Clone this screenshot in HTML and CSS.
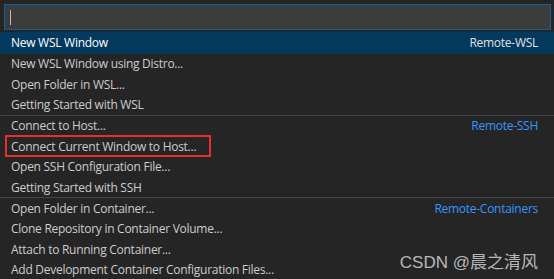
FILE: index.html
```html
<!DOCTYPE html>
<html>
<head>
<meta charset="utf-8">
<link rel="stylesheet" href="styles.css">
</head>
<body>
<div class="picker">
  <div class="input-wrap"><div class="input"><span class="caret"></span></div></div>
  <div class="list">
    <div class="row selected"><span class="label">New WSL Window</span><span class="group">Remote-WSL</span></div>
    <div class="row"><span class="label">New WSL Window using Distro...</span></div>
    <div class="row"><span class="label">Open Folder in WSL...</span></div>
    <div class="row"><span class="label">Getting Started with WSL</span></div>
    <div class="row sep"><span class="label">Connect to Host...</span><span class="group blue">Remote-SSH</span></div>
    <div class="row marked"><span class="label">Connect Current Window to Host...</span></div>
    <div class="row"><span class="label">Open SSH Configuration File...</span></div>
    <div class="row"><span class="label">Getting Started with SSH</span></div>
    <div class="row sep"><span class="label">Open Folder in Container...</span><span class="group blue">Remote-Containers</span></div>
    <div class="row"><span class="label">Clone Repository in Container Volume...</span></div>
    <div class="row"><span class="label">Attach to Running Container...</span></div>
    <div class="row"><span class="label">Add Development Container Configuration Files...</span></div>
  </div>
  <div class="watermark">CSDN @晨之清风</div>
</div>
</body>
</html>
```

FILE: styles.css
```css
html, body {
  margin: 0;
  padding: 0;
  background: #252526;
}
.picker {
  position: relative;
  width: 554px;
  height: 279px;
  overflow: hidden;
  background: #252526;
  font-family: "Open Sans", "Noto Sans", sans-serif;
  font-size: 12px;
  letter-spacing: -0.27px;
  color: #cccccc;
}
.input-wrap {
  padding: 4px 3px 2px 4px;
}
.input {
  height: 24px;
  background: #3c3c3c;
  border: 1px solid #0e639c;
  display: flex;
  align-items: center;
  padding-left: 5px;
}
.caret {
  width: 1px;
  height: 15px;
  background: #bbbbbb;
}
.list {
  display: flex;
  flex-direction: column;
}
.row {
  position: relative;
  height: 20.4px;
  display: flex;
  align-items: center;
  justify-content: space-between;
  padding: 0 16px 0 11px;
  white-space: nowrap;
}
.row.selected {
  height: 21.5px;
  background: #04395e;
  color: #ffffff;
}
.row.sep {
  border-top: 1px solid #454545;
}
.group {
  color: #e0e0e0;
}
.group.blue {
  color: #3794ff;
}
.row.marked::before {
  content: "";
  position: absolute;
  left: 5px;
  top: -1px;
  width: 202px;
  height: 18px;
  border: 2px solid #e5302c;
}
.watermark {
  position: absolute;
  right: 16px;
  bottom: 6px;
  font-family: "Liberation Sans", "Noto Sans CJK SC", sans-serif;
  font-size: 17px;
  letter-spacing: 0;
  color: #b8b8b8;
  line-height: 20px;
}
```
